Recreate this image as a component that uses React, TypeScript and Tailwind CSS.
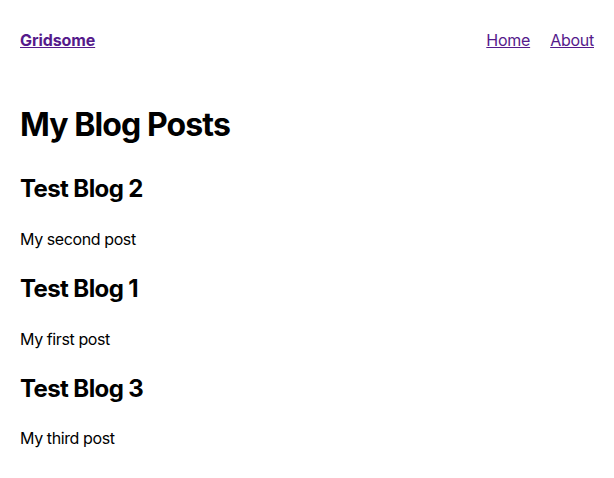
const posts = [
  { title: "Test Blog 2", description: "My second post" },
  { title: "Test Blog 1", description: "My first post" },
  { title: "Test Blog 3", description: "My third post" },
];

const App = () => {
  return (
    <div className="relative w-full min-h-screen bg-white text-black font-['Inter','Noto_Sans',sans-serif] text-base leading-normal">
      <div className="relative max-w-[760px] mx-auto px-5">
        <header className="relative flex items-center justify-between h-20 mb-5">
          <strong>
            <a href="#" className="underline text-[#551a8b] tracking-[-0.1px]">
              Gridsome
            </a>
          </strong>
          <nav className="relative flex items-center tracking-[-0.25px]">
            <a href="#" className="ml-5 underline text-[#551a8b]">
              Home
            </a>
            <a href="#" className="ml-5 underline text-[#551a8b]">
              About
            </a>
          </nav>
        </header>
        <h1 className="text-[32px] font-bold leading-normal tracking-[-0.9px] my-[21.44px]">
          My Blog Posts
        </h1>
        {posts.map((post) => (
          <div key={post.title}>
            <h2 className="text-2xl font-bold leading-normal tracking-[-0.6px] my-[19.92px]">
              {post.title}
            </h2>
            <p className="my-4 tracking-[-0.4px]">{post.description}</p>
          </div>
        ))}
      </div>
    </div>
  );
};

export default App;
